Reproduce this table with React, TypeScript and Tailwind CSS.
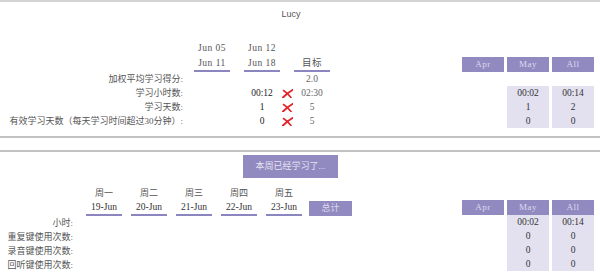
const serif = "font-['Liberation_Serif','Noto_Sans_CJK_SC',serif]";

function RedX() {
  return (
    <svg width="11" height="9" viewBox="0 0 11 9" className="absolute left-[38px] top-[3px]">
      <path d="M1 8.5 C4 5.5 7 3 10.5 1" stroke="#e0252b" strokeWidth="2" fill="none" strokeLinecap="round" />
      <path d="M1.5 1.5 C4 3 6.5 5.5 9 8.5" stroke="#e0252b" strokeWidth="1.6" fill="none" strokeLinecap="round" />
    </svg>
  );
}

function MonthPanel({ rows }: { rows: string[][] }) {
  return (
    <div className="flex gap-[3px] pr-[6px]">
      {["Apr", "May", "All"].map((m, i) => (
        <div key={m} className="w-[42px] flex flex-col">
          <div className="h-[15px] bg-[#918ac0] text-[#dcd8ee] text-[9px] leading-[15px] text-center tracking-[0.5px]">{m}</div>
          {i > 0 && (
            <div className="bg-[#e3e1f0] text-[#333] text-[9.5px]">
              {rows.map((r, j) => (
                <div key={j} className="h-[14px] leading-[14px] text-center">{r[i - 1]}</div>
              ))}
            </div>
          )}
        </div>
      ))}
    </div>
  );
}

function TopSection() {
  const rows = [
    { label: "加权平均学习得分:", w2: "", x: false, target: "2.0" },
    { label: "学习小时数:", w2: "00:12", x: true, target: "02:30" },
    { label: "学习天数:", w2: "1", x: true, target: "5" },
    { label: "有效学习天数（每天学习时间超过30分钟）:", w2: "0", x: true, target: "5" },
  ];
  return (
    <div className="h-[134px]">
      <div className="pt-[6px] pr-[18px] text-center text-[9px] leading-[12px] text-[#555] font-['Liberation_Sans',sans-serif]">Lucy</div>
      <div className="flex mt-[20px]">
        <div className="text-[9.5px]">
          <div className="flex h-[16px] leading-[16px] text-[#555] tracking-[0.5px]">
            <div className="w-[183px]" />
            <div className="ml-[11px] w-[36px] text-center">Jun 05</div>
            <div className="ml-[14px] w-[36px] text-center">Jun 12</div>
          </div>
          <div className="flex text-[#555] tracking-[0.5px]">
            <div className="w-[183px]" />
            <div className="ml-[11px] w-[36px] h-[16px] leading-[14px] text-center border-b-2 border-[#8c86c0]">Jun 11</div>
            <div className="ml-[14px] w-[36px] h-[16px] leading-[14px] text-center border-b-2 border-[#8c86c0]">Jun 18</div>
            <div className="ml-[14px] w-[36px] h-[16px] leading-[14px] text-center border-b-2 border-[#8c86c0]">目标</div>
          </div>
          {rows.map((r) => (
            <div key={r.label} className="flex h-[14px] leading-[14px]">
              <div className="w-[183px] text-right text-[9px] text-[#555] whitespace-nowrap">{r.label}</div>
              <div className="ml-[11px] w-[36px]" />
              <div className="ml-[14px] w-[36px] text-center relative text-[#222]">
                {r.w2}
                {r.x && <RedX />}
              </div>
              <div className="ml-[14px] w-[36px] text-center text-[#666]">{r.target}</div>
            </div>
          ))}
        </div>
        <div className="ml-auto mt-[17px] flex flex-col">
          <div className="flex gap-[3px] pr-[6px]">
            {["Apr", "May", "All"].map((m) => (
              <div key={m} className="w-[42px] h-[15px] bg-[#918ac0] text-[#dcd8ee] text-[9px] leading-[15px] text-center tracking-[0.5px]">{m}</div>
            ))}
          </div>
          <div className="flex gap-[3px] pr-[6px] mt-[14px]">
            <div className="w-[42px]" />
            {[["00:02", "1", "0"], ["00:14", "2", "0"]].map((col, i) => (
              <div key={i} className="w-[42px] bg-[#e3e1f0] text-[#333] text-[9.5px]">
                {col.map((v, j) => (
                  <div key={j} className="h-[14px] leading-[14px] text-center">{v}</div>
                ))}
              </div>
            ))}
          </div>
        </div>
      </div>
    </div>
  );
}

function WeekSection() {
  const days = [
    ["周一", "19-Jun"],
    ["周二", "20-Jun"],
    ["周三", "21-Jun"],
    ["周四", "22-Jun"],
    ["周五", "23-Jun"],
  ];
  const labels = ["小时:", "重复键使用次数:", "录音键使用次数:", "回听键使用次数:"];
  return (
    <div>
      <div className="flex justify-center pr-[19px] mt-[3px]">
        <div className="w-[95px] h-[23px] bg-[#918ac0] text-[#e6e3f3] text-[9px] leading-[23px] text-center">本周已经学习了...</div>
      </div>
      <div className="flex mt-[8px] text-[9.5px]">
        <div>
          <div className="flex h-[15px] leading-[15px] text-[9px] text-[#555]">
            <div className="w-[73px]" />
            {days.map((d, i) => (
              <div key={d[0]} className={`w-[36px] text-center ${i === 0 ? "ml-[13px]" : "ml-[9px]"}`}>{d[0]}</div>
            ))}
          </div>
          <div className="flex text-[#333]">
            <div className="w-[73px]" />
            {days.map((d, i) => (
              <div key={d[1]} className={`w-[36px] h-[15px] leading-[13px] text-center border-b-2 border-[#8c86c0] ${i === 0 ? "ml-[13px]" : "ml-[9px]"}`}>{d[1]}</div>
            ))}
            <div className="ml-[7px] w-[43px] h-[15px] bg-[#918ac0] text-[#dcd8ee] text-[9px] leading-[15px] text-center">总计</div>
          </div>
          {labels.map((l) => (
            <div key={l} className="flex h-[14px] leading-[14px] text-[9px] text-[#555]">
              <div className="w-[73px] text-right whitespace-nowrap">{l}</div>
            </div>
          ))}
        </div>
        <div className="ml-auto mt-[14px]">
          <MonthPanel rows={[["00:02", "00:14"], ["0", "0"], ["0", "0"], ["0", "0"]]} />
        </div>
      </div>
    </div>
  );
}

export default function App() {
  return (
    <div className={`w-[600px] h-[279px] bg-white border-t-2 border-[#d4d4d4] overflow-hidden ${serif}`}>
      <TopSection />
      <div className="border-t-2 border-[#c2c2c2] h-[14px]" />
      <div className="border-t-2 border-[#c2c2c2]" />
      <WeekSection />
    </div>
  );
}
